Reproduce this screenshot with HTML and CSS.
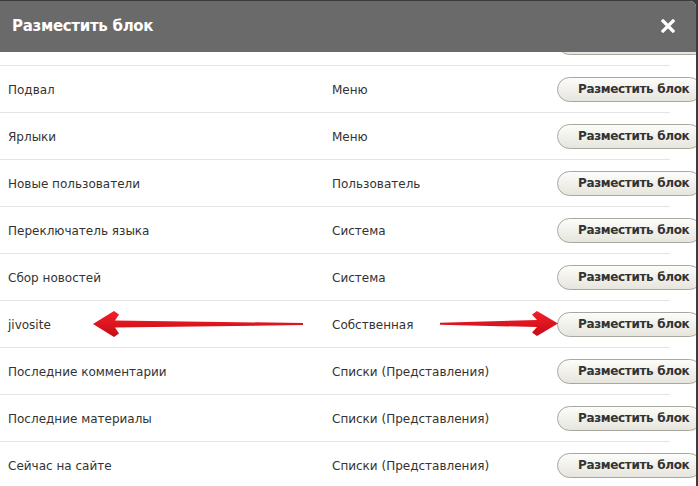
FILE: index.html
```html
<!DOCTYPE html>
<html lang="ru">
<head>
<meta charset="utf-8">
<title>Разместить блок</title>
<link rel="stylesheet" href="styles.css">
</head>
<body>
<div class="dialog">
  <div class="titlebar">
    <span class="title">Разместить блок</span>
    <svg class="close" width="14" height="14" viewBox="0 0 14 14"><path d="M2 2 L12 12 M12 2 L2 12" stroke="#ffffff" stroke-width="3.2" stroke-linecap="square"/></svg>
  </div>
  <div class="content">
    <div class="list">
      <div class="row"><span class="name"></span><span class="cat"></span><span class="cell-btn"><span class="btn btn-empty"></span></span></div>
      <div class="row"><span class="name">Подвал</span><span class="cat">Меню</span><span class="cell-btn"><span class="btn">Разместить блок</span></span></div>
      <div class="row"><span class="name">Ярлыки</span><span class="cat">Меню</span><span class="cell-btn"><span class="btn">Разместить блок</span></span></div>
      <div class="row"><span class="name">Новые пользователи</span><span class="cat">Пользователь</span><span class="cell-btn"><span class="btn">Разместить блок</span></span></div>
      <div class="row"><span class="name">Переключатель языка</span><span class="cat">Система</span><span class="cell-btn"><span class="btn">Разместить блок</span></span></div>
      <div class="row"><span class="name">Сбор новостей</span><span class="cat">Система</span><span class="cell-btn"><span class="btn">Разместить блок</span></span></div>
      <div class="row"><span class="name">jivosite</span><span class="cat">Собственная</span><span class="cell-btn"><span class="btn">Разместить блок</span></span></div>
      <div class="row"><span class="name">Последние комментарии</span><span class="cat">Списки (Представления)</span><span class="cell-btn"><span class="btn">Разместить блок</span></span></div>
      <div class="row"><span class="name">Последние материалы</span><span class="cat">Списки (Представления)</span><span class="cell-btn"><span class="btn">Разместить блок</span></span></div>
      <div class="row"><span class="name">Сейчас на сайте</span><span class="cat">Списки (Представления)</span><span class="cell-btn"><span class="btn">Разместить блок</span></span></div>
    </div>
    <svg class="arrows" width="698" height="486" viewBox="0 0 698 486">
      <defs>
        <linearGradient id="ga" x1="0" y1="0" x2="0" y2="1">
          <stop offset="0" stop-color="#f2202a"/>
          <stop offset="1" stop-color="#c80a14"/>
        </linearGradient>
      </defs>
      <path d="M93 324 L114 311 L119 314.5 L115 320.5 L303 323 L303 325 L115 327.5 L119 333.5 L114 337 Z" fill="url(#ga)"/>
      <path d="M558 323.5 L537 311 L532 314.5 L537 320 L440 322.8 L440 324.8 L537 327 L532 332.5 L537 336 Z" fill="url(#ga)"/>
    </svg>
  </div>
</div>
</body>
</html>
```
FILE: styles.css
```css
html, body {
  margin: 0;
  padding: 0;
}
body {
  width: 698px;
  height: 486px;
  overflow: hidden;
  background: #3c3c3c;
  font-family: "DejaVu Sans", Verdana, sans-serif;
}
.dialog {
  position: relative;
  margin-top: 1px;
  width: 696px;
  height: 485px;
  background: #ffffff;
  border-top-right-radius: 6px;
  overflow: hidden;
}
.titlebar {
  height: 51px;
  background: #6a6a6a;
  display: flex;
  align-items: center;
  justify-content: space-between;
  padding: 0 21px 0 12px;
  position: relative;
  z-index: 2;
}
.title {
  color: #ffffff;
  font-weight: bold;
  font-size: 15px;
  letter-spacing: -0.3px;
  margin-top: -1px;
}
.close {
  display: block;
  margin-top: -1px;
}
.content {
  height: 434px;
  overflow: hidden;
  position: relative;
}
.list {
  width: 670px;
  margin-top: -33px;
}
.row {
  height: 46px;
  border-bottom: 1px solid #e4e4e4;
  display: flex;
  align-items: center;
  font-size: 12px;
  color: #333333;
}
.name {
  width: 324px;
  padding-left: 8px;
  flex: none;
  margin-top: 2px;
}
.cat {
  width: 225px;
  flex: none;
  margin-top: 2px;
}
.cell-btn {
  flex: none;
  width: 150px;
}
.btn {
  display: inline-block;
  box-sizing: border-box;
  height: 25px;
  line-height: 23px;
  padding: 0 12px 0 20px;
  border: 1px solid #a8a8a0;
  border-radius: 13px;
  background: linear-gradient(#fcfcfa, #e6e5dd);
  font-weight: bold;
  font-size: 12px;
  letter-spacing: -0.35px;
  color: #333333;
  white-space: nowrap;
  vertical-align: middle;
}
.btn-empty {
  width: 150px;
}
.arrows {
  position: absolute;
  left: 0;
  top: -52px;
  pointer-events: none;
}
```
